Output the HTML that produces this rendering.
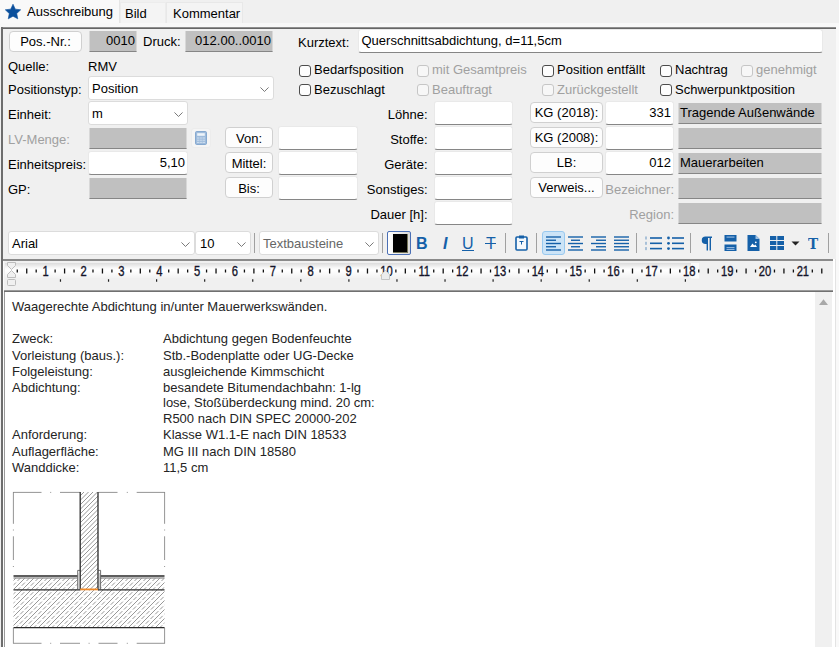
<!DOCTYPE html>
<html><head><meta charset="utf-8">
<style>
*{box-sizing:border-box;margin:0;padding:0}
html,body{width:839px;height:647px;overflow:hidden;background:#f0f0f0;font-family:"Liberation Sans",sans-serif;font-size:13px;color:#000}
.a{position:absolute;white-space:nowrap}
.l{position:absolute;white-space:nowrap;height:16px;line-height:16px}
.g{color:#a0a0a0}
.btn{position:absolute;background:#fdfdfd;border:1px solid #d0d0d0;border-radius:4px;text-align:center;height:21px;line-height:19px}
.in{position:absolute;background:#fff;border:1px solid #e9e9e9;border-bottom:1px solid #868686;border-radius:3px;height:24px;line-height:21px;padding:0 2px 0 4px;white-space:nowrap;overflow:hidden}
.gf{position:absolute;background:#c0c0c0;border-bottom:1px solid #868686;border-left:1px solid #d8d8d8;border-right:1px solid #d8d8d8;height:21px;line-height:19px;padding:0 1px 0 1px;white-space:nowrap}
.r{text-align:right}
.cb{position:absolute;width:12px;height:12px;border:1px solid #4c4c4c;border-radius:3px;background:#fdfdfd}
.cb.d{border-color:#c6c6c6;background:#f7f7f7}
.sel{position:absolute;background:#fff;border:1px solid #dcdcdc;border-radius:3px;height:23px;line-height:21px;padding:0 3px}
.chev{position:absolute;right:4px;top:9.5px;width:9px;height:5.4px}
</style></head><body>
<!-- tabs -->
<div class="a" style="left:0;top:0;width:120px;height:28px;background:#f9f9f9;border-right:1px solid #e5e5e5"></div>
<div class="a" style="left:120px;top:2px;width:46px;height:22px;background:#f4f4f4;border:1px solid #ececec"></div>
<div class="a" style="left:166px;top:2px;width:77px;height:22px;background:#f4f4f4;border:1px solid #e8e8e8"></div>
<svg class="a" style="left:4px;top:3px" width="18" height="17" viewBox="0 0 18 17"><path d="M9.00 1.20 L11.29 6.14 L16.70 6.80 L12.71 10.51 L13.76 15.85 L9.00 13.20 L4.24 15.85 L5.29 10.51 L1.30 6.80 L6.71 6.14Z" fill="#0a4f9c" stroke="#0a4f9c" stroke-width="0.6" stroke-linejoin="round"/></svg>
<div class="l" style="left:27px;top:4px">Ausschreibung</div>
<div class="l" style="left:125px;top:6px">Bild</div>
<div class="l" style="left:173px;top:6px">Kommentar</div>
<!-- panel border -->
<div class="a" style="left:0;top:23px;width:839px;height:4px;background:#f8f8f8"></div><div class="a" style="left:1px;top:27px;width:835px;height:2px;background:linear-gradient(180deg,#8e8e8e 0 50%,#666 50% 100%)"></div>
<div class="a" style="left:1px;top:27px;width:2px;height:620px;background:#6d6d6d"></div>

<!-- row1 -->
<div class="btn" style="left:9px;top:31px;width:73px">Pos.-Nr.:</div>
<div class="gf r" style="left:89px;top:31px;width:48px">0010</div>
<div class="l" style="left:143px;top:34px">Druck:</div>
<div class="gf r" style="left:185px;top:31px;width:88px">012.00..0010</div>
<div class="l" style="left:298px;top:35px">Kurztext:</div>
<div class="in" style="left:358px;top:29px;width:465px;padding-left:2.5px">Querschnittsabdichtung, d=11,5cm</div>

<!-- form -->
<div class="l" style="left:8px;top:59px">Quelle:</div><div class="l" style="left:88px;top:59px">RMV</div>
<div class="l" style="left:8px;top:82px">Positionstyp:</div>
<div class="sel" style="left:88px;top:76px;width:186px;height:24px;line-height:23px">Position<svg class="chev" viewBox="0 0 10 6"><path d="M0.5 0.5 L5 5 L9.5 0.5" fill="none" stroke="#6a6a6a" stroke-width="1"/></svg></div>
<div class="l" style="left:8px;top:107px">Einheit:</div>
<div class="sel" style="left:88px;top:101px;width:100px;height:24px;line-height:23px">m<svg class="chev" viewBox="0 0 10 6"><path d="M0.5 0.5 L5 5 L9.5 0.5" fill="none" stroke="#6a6a6a" stroke-width="1"/></svg></div>
<div class="cb" style="left:299px;top:65px"></div><div class="l" style="left:314px;top:62px">Bedarfsposition</div>
<div class="cb d" style="left:417px;top:65px"></div><div class="l g" style="left:432px;top:62px">mit Gesamtpreis</div>
<div class="cb" style="left:542px;top:65px"></div><div class="l" style="left:557px;top:62px">Position entfällt</div>
<div class="cb" style="left:660px;top:65px"></div><div class="l" style="left:675px;top:62px">Nachtrag</div>
<div class="cb d" style="left:741px;top:65px"></div><div class="l g" style="left:756px;top:62px">genehmigt</div>
<div class="cb" style="left:299px;top:84px"></div><div class="l" style="left:314px;top:82px">Bezuschlagt</div>
<div class="cb d" style="left:417px;top:84px"></div><div class="l g" style="left:432px;top:82px">Beauftragt</div>
<div class="cb d" style="left:542px;top:84px"></div><div class="l g" style="left:557px;top:82px">Zurückgestellt</div>
<div class="cb" style="left:660px;top:84px"></div><div class="l" style="left:675px;top:82px">Schwerpunktposition</div>
<div class="l g" style="left:8px;top:132px">LV-Menge:</div>
<div class="gf" style="left:89px;top:128px;width:98px"></div>
<div class="l" style="left:8px;top:157px">Einheitspreis:</div>
<div class="in r" style="left:88px;top:151px;width:100px">5,10</div>
<div class="l" style="left:8px;top:182px">GP:</div>
<div class="gf" style="left:89px;top:178px;width:98px"></div>
<div class="a" style="left:191px;top:128px;width:20px;height:20px;background:#f5f5f5;border:1px solid #ececec;border-radius:3px"></div><svg class="a" style="left:195px;top:131px" width="12" height="14" viewBox="0 0 12 14"><rect x="0.5" y="0.5" width="11" height="13" rx="1.2" fill="#9fbcdc" stroke="#86a9d0"/><rect x="2.2" y="2.2" width="7.6" height="2.6" fill="#eef4fa"/><g stroke="#cfdff0" stroke-width="1"><path d="M2 7H10M2 9.2H10M2 11.4H10"/></g><g stroke="#9fbcdc" stroke-width="0.6"><path d="M4.6 6v6.5M7.3 6v6.5"/></g></svg>
<div class="btn" style="left:225px;top:127px;width:48px;line-height:21px">Von:</div>
<div class="in" style="left:278px;top:126px;width:80px"></div>
<div class="btn" style="left:225px;top:152px;width:48px;line-height:21px">Mittel:</div>
<div class="in" style="left:278px;top:151px;width:80px"></div>
<div class="btn" style="left:225px;top:177px;width:48px;line-height:21px">Bis:</div>
<div class="in" style="left:278px;top:176px;width:80px"></div>
<div class="l r" style="left:340px;width:87.5px;top:107px">Löhne:</div>
<div class="in" style="left:434px;top:101px;width:79px"></div>
<div class="l r" style="left:340px;width:87.5px;top:132px">Stoffe:</div>
<div class="in" style="left:434px;top:126px;width:79px"></div>
<div class="l r" style="left:340px;width:87.5px;top:157px">Geräte:</div>
<div class="in" style="left:434px;top:151px;width:79px"></div>
<div class="l r" style="left:340px;width:87.5px;top:182px">Sonstiges:</div>
<div class="in" style="left:434px;top:176px;width:79px"></div>
<div class="l r" style="left:340px;width:87.5px;top:207px">Dauer [h]:</div>
<div class="in" style="left:434px;top:201px;width:79px"></div>
<div class="btn" style="left:530px;top:102px;width:73px">KG (2018):</div>
<div class="btn" style="left:530px;top:127px;width:73px">KG (2008):</div>
<div class="btn" style="left:530px;top:152px;width:73px">LB:</div>
<div class="btn" style="left:530px;top:177px;width:73px">Verweis...</div>
<div class="in r" style="left:605px;top:101px;width:69px">331</div>
<div class="in r" style="left:605px;top:126px;width:69px"></div>
<div class="in r" style="left:605px;top:151px;width:69px">012</div>
<div class="gf" style="left:678px;top:103px;width:144px">Tragende Außenwände</div>
<div class="gf" style="left:678px;top:128px;width:144px"></div>
<div class="gf" style="left:678px;top:153px;width:144px">Mauerarbeiten</div>
<div class="gf" style="left:678px;top:178px;width:144px"></div>
<div class="gf" style="left:678px;top:203px;width:144px"></div>
<div class="l g r" style="left:600px;width:74px;top:182px">Bezeichner:</div>
<div class="l g r" style="left:600px;width:74px;top:207px">Region:</div>

<!-- toolbar -->
<div class="sel" style="left:8px;top:231px;width:187px;height:24px;line-height:24px;padding-left:3px">Arial<svg class="chev" viewBox="0 0 10 6"><path d="M0.5 0.5 L5 5 L9.5 0.5" fill="none" stroke="#6a6a6a" stroke-width="1"/></svg></div>
<div class="sel" style="left:195px;top:231px;width:56px;height:24px;line-height:24px;padding-left:4px">10<svg class="chev" viewBox="0 0 10 6"><path d="M0.5 0.5 L5 5 L9.5 0.5" fill="none" stroke="#6a6a6a" stroke-width="1"/></svg></div>
<div class="sel" style="left:259px;top:231px;width:120px;height:24px;line-height:24px;padding-left:3px;color:#666">Textbausteine<svg class="chev" viewBox="0 0 10 6"><path d="M0.5 0.5 L5 5 L9.5 0.5" fill="none" stroke="#6a6a6a" stroke-width="1"/></svg></div>
<div class="a" style="left:254px;top:233px;width:1px;height:20px;background:#a0a0a0"></div>
<div class="a" style="left:382px;top:233px;width:1px;height:20px;background:#a0a0a0"></div>
<div class="a" style="left:505px;top:233px;width:1px;height:20px;background:#a0a0a0"></div>
<div class="a" style="left:536px;top:233px;width:1px;height:20px;background:#a0a0a0"></div>
<div class="a" style="left:636px;top:233px;width:1px;height:20px;background:#a0a0a0"></div>
<div class="a" style="left:690px;top:233px;width:1px;height:20px;background:#a0a0a0"></div>
<div class="a" style="left:828px;top:233px;width:1px;height:20px;background:#a0a0a0"></div>
<div class="a" style="left:387px;top:231px;width:24px;height:24px;border:1px solid #4a6fb5;border-radius:2px;background:linear-gradient(90deg,#fff,#d8d8d8)"></div>
<div class="a" style="left:393px;top:234px;width:15px;height:19px;background:#000;border-right:1px solid #77775a;border-bottom:1px solid #77775a"></div>
<div class="a" style="left:416px;top:234px;font-size:16px;font-weight:bold;color:#1560a8;line-height:20px">B</div>
<div class="a" style="left:443px;top:234px;font-size:16px;font-weight:bold;font-style:italic;color:#1560a8;line-height:20px">I</div>
<div class="a" style="left:462px;top:234px;font-size:16px;color:#1560a8;line-height:20px">U</div><div class="a" style="left:462px;top:250px;width:12px;height:1px;background:#1560a8"></div>
<div class="a" style="left:486px;top:234px;font-size:16px;color:#1560a8;line-height:20px">T</div><div class="a" style="left:485px;top:243px;width:11px;height:1px;background:#1560a8"></div>
<svg class="a" style="left:515px;top:235px" width="13" height="16" viewBox="0 0 13 16"><rect x="1" y="2" width="11" height="13" rx="1" fill="#f4f8fc" stroke="#1560a8" stroke-width="1.6"/><rect x="4" y="0.5" width="5" height="3" fill="#1560a8"/><path d="M4.5 6.5h4M6.5 6.5v3" stroke="#1560a8" stroke-width="1" fill="none"/></svg>
<div class="a" style="left:542px;top:231px;width:23px;height:24px;background:#cce4f7;border:1px solid #99c9ef;border-radius:3px"></div>
<svg class="a" style="left:546px;top:231px" width="16" height="24" viewBox="0 0 16 24"><g stroke="#1560a8" stroke-width="1.4"><path d="M0 6H15"/><path d="M0 9.25H10"/><path d="M0 12.5H15"/><path d="M0 15.75H10"/><path d="M0 19H15"/></g></svg>
<svg class="a" style="left:568px;top:231px" width="16" height="24" viewBox="0 0 16 24"><g stroke="#1560a8" stroke-width="1.4"><path d="M0 6H15"/><path d="M3 9.25H12"/><path d="M0 12.5H15"/><path d="M3 15.75H12"/><path d="M0 19H15"/></g></svg>
<svg class="a" style="left:591px;top:231px" width="16" height="24" viewBox="0 0 16 24"><g stroke="#1560a8" stroke-width="1.4"><path d="M0 6H15"/><path d="M5 9.25H15"/><path d="M0 12.5H15"/><path d="M5 15.75H15"/><path d="M0 19H15"/></g></svg>
<svg class="a" style="left:614px;top:231px" width="16" height="24" viewBox="0 0 16 24"><g stroke="#1560a8" stroke-width="1.4"><path d="M0 6H15"/><path d="M0 9.25H15"/><path d="M0 12.5H15"/><path d="M0 15.75H15"/><path d="M0 19H15"/></g></svg>
<svg class="a" style="left:645px;top:231px" width="18" height="24" viewBox="0 0 18 24"><g stroke="#1560a8" stroke-width="1.6"><path d="M5 7H17"/><path d="M5 12.3H17"/><path d="M5 17.6H17"/></g><rect x="0.5" y="5.5" width="1" height="3" fill="#1560a8" opacity=".65"/><rect x="0.5" y="10.8" width="1" height="3" fill="#1560a8" opacity=".65"/><rect x="0.5" y="16.1" width="1" height="3" fill="#1560a8" opacity=".65"/></svg>
<svg class="a" style="left:667px;top:231px" width="18" height="24" viewBox="0 0 18 24"><g stroke="#1560a8" stroke-width="1.6"><path d="M5 7H17"/><path d="M5 12.3H17"/><path d="M5 17.6H17"/></g><circle cx="1.5" cy="7" r="1.4" fill="#1560a8"/><circle cx="1.5" cy="12.3" r="1.4" fill="#1560a8"/><circle cx="1.5" cy="17.6" r="1.4" fill="#1560a8"/></svg>
<svg class="a" style="left:700px;top:236px" width="13" height="15" viewBox="0 0 13 15"><path d="M5.5 0.5 H12 V2 H11 V14.5 H9.6 V2 H8 V14.5 H6.6 V8 H5.5 A3.75 3.75 0 0 1 5.5 0.5Z" fill="#1560a8"/></svg>
<svg class="a" style="left:724px;top:235px" width="13" height="16" viewBox="0 0 13 16"><rect x="0.5" y="0" width="12" height="6.5" fill="#1560a8"/><rect x="0.5" y="9.5" width="12" height="6.5" fill="#1560a8"/><rect x="2.5" y="1.5" width="8" height="1.2" fill="#8fb4dc"/><rect x="2.5" y="12" width="8" height="1.2" fill="#8fb4dc"/><rect x="2.5" y="14" width="8" height="1" fill="#8fb4dc"/></svg>
<svg class="a" style="left:747px;top:235px" width="13" height="16" viewBox="0 0 13 16"><path d="M0.5 0H8.5L12.5 4V16H0.5Z" fill="#1560a8"/><path d="M8.5 0V4H12.5Z" fill="#9cc0e4"/><path d="M3 12 L5.5 8.5 L7.2 10.5 L8.3 9.5 L10 12Z" fill="#fff"/><circle cx="8.8" cy="7.3" r="0.9" fill="#fff"/></svg>
<svg class="a" style="left:770px;top:236px" width="14" height="14" viewBox="0 0 14 14"><g fill="#1560a8"><rect x="0" y="0" width="6.3" height="4"/><rect x="7.3" y="0" width="6.7" height="4"/><rect x="0" y="5" width="6.3" height="4"/><rect x="7.3" y="5" width="6.7" height="4"/><rect x="0" y="10" width="6.3" height="4"/><rect x="7.3" y="10" width="6.7" height="4"/></g></svg>
<svg class="a" style="left:791px;top:241px" width="9" height="5" viewBox="0 0 9 5"><path d="M0.5 0.5H8.5L4.5 4.5Z" fill="#222"/></svg>
<div class="a" style="left:808px;top:234px;font-family:'DejaVu Serif','Liberation Serif',serif;font-size:15.5px;font-weight:bold;color:#1560a8;line-height:20px;transform:scaleX(.88);transform-origin:left">T</div>

<!-- ruler -->
<div class="a" style="left:3px;top:259px;width:830px;height:2px;background:#8a8a8a"></div>
<div class="a" style="left:3px;top:290px;width:830px;height:2px;background:linear-gradient(180deg,#9a9a9a 0 50%,#707070 50% 100%)"></div>
<div class="a" style="left:5px;top:263px;width:694px;height:15px;background:linear-gradient(180deg,#dcdcdc 0%,#fafafa 35%,#ffffff 50%,#f2f2f2 100%)"></div>
<svg class="a" style="left:0;top:261px" width="834" height="29" viewBox="0 0 834 29"><rect x="691" y="2" width="8" height="15.5" fill="#fbfbfb"/><path d="M17.27 8.5v3M26.73 7.5v5M36.20 8.5v3M55.12 8.5v3M64.59 7.5v5M74.05 8.5v3M92.98 8.5v3M102.45 7.5v5M111.91 8.5v3M130.84 8.5v3M140.31 7.5v5M149.78 8.5v3M168.71 8.5v3M178.17 7.5v5M187.64 8.5v3M206.56 8.5v3M216.03 7.5v5M225.50 8.5v3M244.43 8.5v3M253.89 7.5v5M263.36 8.5v3M282.29 8.5v3M291.75 7.5v5M301.22 8.5v3M320.14 8.5v3M329.61 7.5v5M339.07 8.5v3M358.00 8.5v3M367.47 7.5v5M376.94 8.5v3M395.87 8.5v3M405.33 7.5v5M414.80 8.5v3M433.73 8.5v3M443.19 7.5v5M452.66 8.5v3M471.58 8.5v3M481.05 7.5v5M490.51 8.5v3M509.44 8.5v3M518.91 7.5v5M528.38 8.5v3M547.30 8.5v3M556.77 7.5v5M566.23 8.5v3M585.16 8.5v3M594.63 7.5v5M604.09 8.5v3M623.02 8.5v3M632.49 7.5v5M641.95 8.5v3M660.88 8.5v3M670.35 7.5v5M679.81 8.5v3M698.74 8.5v3M708.21 7.5v5M717.67 8.5v3M736.60 8.5v3M746.07 7.5v5M755.53 8.5v3M774.46 8.5v3M783.93 7.5v5M793.39 8.5v3M812.32 8.5v3M821.79 7.5v5" stroke="#111" stroke-width="1.3" fill="none"/><path d="M60.47 18.3v2.4M108.54 18.3v2.4M156.61 18.3v2.4M204.68 18.3v2.4M252.75 18.3v2.4M300.82 18.3v2.4M348.89 18.3v2.4M396.96 18.3v2.4M445.03 18.3v2.4M493.10 18.3v2.4M541.17 18.3v2.4M589.24 18.3v2.4M637.31 18.3v2.4M685.38 18.3v2.4" stroke="#222" stroke-width="1.2" fill="none"/><g font-family="Liberation Sans, sans-serif" font-size="14" fill="#14142a" stroke="#14142a" stroke-width="0.35" text-anchor="middle"><text transform="translate(45.66 15.2) scale(0.8 1)">1</text><text transform="translate(83.52 15.2) scale(0.8 1)">2</text><text transform="translate(121.38 15.2) scale(0.8 1)">3</text><text transform="translate(159.24 15.2) scale(0.8 1)">4</text><text transform="translate(197.10 15.2) scale(0.8 1)">5</text><text transform="translate(234.96 15.2) scale(0.8 1)">6</text><text transform="translate(272.82 15.2) scale(0.8 1)">7</text><text transform="translate(310.68 15.2) scale(0.8 1)">8</text><text transform="translate(348.54 15.2) scale(0.8 1)">9</text><text transform="translate(386.40 15.2) scale(0.8 1)">10</text><text transform="translate(424.26 15.2) scale(0.8 1)">11</text><text transform="translate(462.12 15.2) scale(0.8 1)">12</text><text transform="translate(499.98 15.2) scale(0.8 1)">13</text><text transform="translate(537.84 15.2) scale(0.8 1)">14</text><text transform="translate(575.70 15.2) scale(0.8 1)">15</text><text transform="translate(613.56 15.2) scale(0.8 1)">16</text><text transform="translate(651.42 15.2) scale(0.8 1)">17</text><text transform="translate(689.28 15.2) scale(0.8 1)">18</text><text transform="translate(727.14 15.2) scale(0.8 1)">19</text><text transform="translate(765.00 15.2) scale(0.8 1)">20</text><text transform="translate(802.86 15.2) scale(0.8 1)">21</text></g><g fill="#ececec" stroke="#c4c4c4" stroke-width="1"><path d="M381.5 18.5v-5l4-4l4 4v5z"/></g><g fill="#f0f0f0" stroke="#bdbdbd" stroke-width="1"><path d="M7.5 1.5h8v3l-4 4l-4-4z"/><path d="M7.5 16.5v-3l4-4l4 4v3z"/><rect x="7.5" y="18.5" width="8" height="6" rx="1"/></g></svg>
<!-- editor -->
<div class="a" style="left:3px;top:261px;width:1px;height:386px;background:#fbfbfb"></div>
<div class="a" style="left:833px;top:259px;width:2px;height:388px;background:#fff"></div><div class="a" style="left:835px;top:259px;width:1px;height:388px;background:#e3e3e3"></div>
<div class="a" style="left:4px;top:292px;width:829px;height:355px;background:#fff;border-left:1px solid #9a9a9a"></div>
<div class="a" style="left:815px;top:292px;width:17px;height:355px;background:#f0f0f0"></div>
<svg class="a" style="left:819px;top:299px" width="9" height="6" viewBox="0 0 9 6"><path d="M0 6L4.5 0.3L9 6Z" fill="#a8a8a8"/></svg>
<div class="a" style="left:836px;top:24px;width:3px;height:623px;background:#f9f9f9"></div>
<div class="l" style="left:12px;top:299px;color:#242424">Waagerechte Abdichtung in/unter Mauerwerkswänden.</div>
<div class="l" style="left:12px;top:331px;color:#242424">Zweck:</div><div class="l" style="left:163px;top:331px;color:#242424">Abdichtung gegen Bodenfeuchte</div>
<div class="l" style="left:12px;top:348px;color:#242424">Vorleistung (baus.):</div><div class="l" style="left:163px;top:348px;color:#242424">Stb.-Bodenplatte oder UG-Decke</div>
<div class="l" style="left:12px;top:364px;color:#242424">Folgeleistung:</div><div class="l" style="left:163px;top:364px;color:#242424">ausgleichende Kimmschicht</div>
<div class="l" style="left:12px;top:380px;color:#242424">Abdichtung:</div><div class="l" style="left:163px;top:380px;color:#242424">besandete Bitumendachbahn: 1-lg</div>
<div class="l" style="left:163px;top:395px;color:#242424">lose, Stoßüberdeckung mind. 20 cm:</div>
<div class="l" style="left:163px;top:411px;color:#242424">R500 nach DIN SPEC 20000-202</div>
<div class="l" style="left:12px;top:427px;color:#242424">Anforderung:</div><div class="l" style="left:163px;top:427px;color:#242424">Klasse W1.1-E nach DIN 18533</div>
<div class="l" style="left:12px;top:444px;color:#242424">Auflagerfläche:</div><div class="l" style="left:163px;top:444px;color:#242424">MG III nach DIN 18580</div>
<div class="l" style="left:12px;top:460px;color:#242424">Wanddicke:</div><div class="l" style="left:163px;top:460px;color:#242424">11,5 cm</div>

<!-- drawing -->
<svg class="a" style="left:10px;top:489px" width="160" height="158" viewBox="10 489 160 158">
<clipPath id="cw"><rect x="80" y="492" width="18" height="97.5"/></clipPath><g clip-path="url(#cw)" stroke="#858585" stroke-width="0.85" fill="none"><path d="M-19.00 590.50L80.50 491.00M-14.50 590.50L85.00 491.00M-10.00 590.50L89.50 491.00M-5.50 590.50L94.00 491.00M-1.00 590.50L98.50 491.00M3.50 590.50L103.00 491.00M8.00 590.50L107.50 491.00M12.50 590.50L112.00 491.00M17.00 590.50L116.50 491.00M21.50 590.50L121.00 491.00M26.00 590.50L125.50 491.00M30.50 590.50L130.00 491.00M35.00 590.50L134.50 491.00M39.50 590.50L139.00 491.00M44.00 590.50L143.50 491.00M48.50 590.50L148.00 491.00M53.00 590.50L152.50 491.00M57.50 590.50L157.00 491.00M62.00 590.50L161.50 491.00M66.50 590.50L166.00 491.00M71.00 590.50L170.50 491.00M75.50 590.50L175.00 491.00M80.00 590.50L179.50 491.00M84.50 590.50L184.00 491.00M89.00 590.50L188.50 491.00M93.50 590.50L193.00 491.00M98.00 590.50L197.50 491.00"/></g>
<clipPath id="ce1"><rect x="13.5" y="578.5" width="64.0" height="11.0"/></clipPath><g clip-path="url(#ce1)" stroke="#858585" stroke-width="0.85" fill="none"><path d="M3.50 590.50L16.50 577.50M12.50 590.50L25.50 577.50M21.50 590.50L34.50 577.50M30.50 590.50L43.50 577.50M39.50 590.50L52.50 577.50M48.50 590.50L61.50 577.50M57.50 590.50L70.50 577.50M66.50 590.50L79.50 577.50M75.50 590.50L88.50 577.50"/><path d="M-1.00 590.50L12.00 577.50M8.00 590.50L21.00 577.50M17.00 590.50L30.00 577.50M26.00 590.50L39.00 577.50M35.00 590.50L48.00 577.50M44.00 590.50L57.00 577.50M53.00 590.50L66.00 577.50M62.00 590.50L75.00 577.50M71.00 590.50L84.00 577.50M80.00 590.50L93.00 577.50" stroke-dasharray="4.5 2.2"/></g>
<clipPath id="ce2"><rect x="100.5" y="578.5" width="64.0" height="11.0"/></clipPath><g clip-path="url(#ce2)" stroke="#858585" stroke-width="0.85" fill="none"><path d="M84.50 590.50L97.50 577.50M93.50 590.50L106.50 577.50M102.50 590.50L115.50 577.50M111.50 590.50L124.50 577.50M120.50 590.50L133.50 577.50M129.50 590.50L142.50 577.50M138.50 590.50L151.50 577.50M147.50 590.50L160.50 577.50M156.50 590.50L169.50 577.50M165.50 590.50L178.50 577.50"/><path d="M89.00 590.50L102.00 577.50M98.00 590.50L111.00 577.50M107.00 590.50L120.00 577.50M116.00 590.50L129.00 577.50M125.00 590.50L138.00 577.50M134.00 590.50L147.00 577.50M143.00 590.50L156.00 577.50M152.00 590.50L165.00 577.50M161.00 590.50L174.00 577.50" stroke-dasharray="4.5 2.2"/></g>
<clipPath id="cs"><rect x="13.5" y="590" width="151.0" height="37.5"/></clipPath><g clip-path="url(#cs)" stroke="#858585" stroke-width="0.85" fill="none"><path d="M-25.50 628.50L14.00 589.00M-16.50 628.50L23.00 589.00M-7.50 628.50L32.00 589.00M1.50 628.50L41.00 589.00M10.50 628.50L50.00 589.00M19.50 628.50L59.00 589.00M28.50 628.50L68.00 589.00M37.50 628.50L77.00 589.00M46.50 628.50L86.00 589.00M55.50 628.50L95.00 589.00M64.50 628.50L104.00 589.00M73.50 628.50L113.00 589.00M82.50 628.50L122.00 589.00M91.50 628.50L131.00 589.00M100.50 628.50L140.00 589.00M109.50 628.50L149.00 589.00M118.50 628.50L158.00 589.00M127.50 628.50L167.00 589.00M136.50 628.50L176.00 589.00M145.50 628.50L185.00 589.00M154.50 628.50L194.00 589.00M163.50 628.50L203.00 589.00"/><path d="M-21.00 628.50L18.50 589.00M-12.00 628.50L27.50 589.00M-3.00 628.50L36.50 589.00M6.00 628.50L45.50 589.00M15.00 628.50L54.50 589.00M24.00 628.50L63.50 589.00M33.00 628.50L72.50 589.00M42.00 628.50L81.50 589.00M51.00 628.50L90.50 589.00M60.00 628.50L99.50 589.00M69.00 628.50L108.50 589.00M78.00 628.50L117.50 589.00M87.00 628.50L126.50 589.00M96.00 628.50L135.50 589.00M105.00 628.50L144.50 589.00M114.00 628.50L153.50 589.00M123.00 628.50L162.50 589.00M132.00 628.50L171.50 589.00M141.00 628.50L180.50 589.00M150.00 628.50L189.50 589.00M159.00 628.50L198.50 589.00" stroke-dasharray="4.5 2.2"/></g>
<path d="M13.25 492.4H41.5M13.25 643.3H41.5M50.2 492.4H51.2M50.2 643.3H51.2M60 492.4H80M60 643.3H80M98.5 492.4H117.5M98.5 643.3H117.5M126.8 492.4H127.8M126.8 643.3H127.8M136.7 492.4H164.75M136.7 643.3H164.75M88.6 643.3h1M13.4 492V523.8M164.6 492V523.8M13.4 529.5V530.5M164.6 529.5V530.5M13.4 536.3V560M164.6 536.3V560M13.4 566V567M164.6 566V567M13.4 628V643.5M164.6 628V643.5" stroke="#7a7a7a" stroke-width="0.8" fill="none"/>
<g stroke="#2a2a2a" stroke-width="1.3" fill="none">
<path d="M80.2 492V589.5M98 492V589.5"/>
<path d="M13.5 576H77.5M100.7 576H164.5"/>
<path d="M13.5 589.8H80M98 589.8H164.5"/>
<path d="M13.5 627.7H164.5"/>
</g>
<g stroke="#4a4a4a" stroke-width="0.8" fill="none">
<path d="M13.5 578H77.5M100.7 578H164.5"/>
<path d="M77.7 589.5V570.4H80.2M100.6 589.5V570.4H98"/>
<path d="M79 573V589M99.4 573V589" stroke="#999" stroke-width="0.6"/>
</g>
<path d="M80.2 589.4H98" stroke="#f08a28" stroke-width="1.8"/>
</svg>
</body></html>
